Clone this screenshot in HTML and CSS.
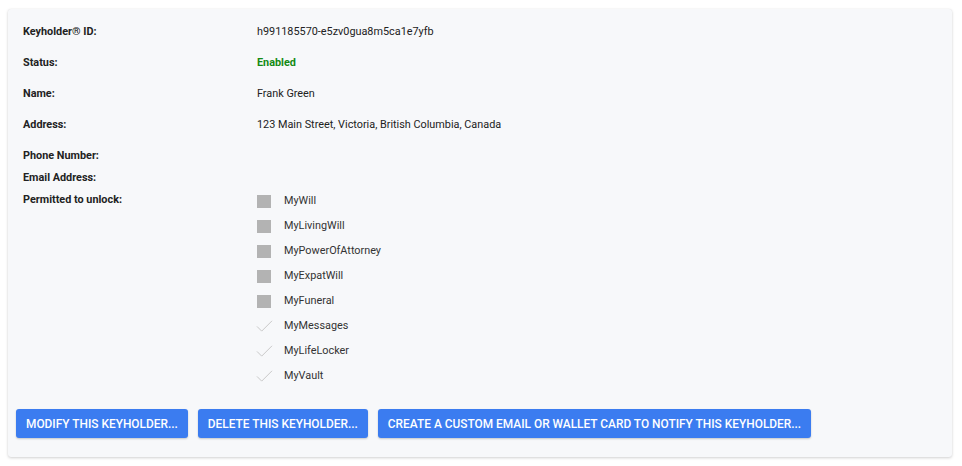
FILE: index.html
```html
<!DOCTYPE html>
<html lang="en">
<head>
<meta charset="utf-8">
<title>Keyholder</title>
<link rel="stylesheet" href="styles.css">
</head>
<body>
<div class="card">
  <div class="info">
    <div class="row"><div class="label">Keyholder® ID:</div><div class="value">h991185570-e5zv0gua8m5ca1e7yfb</div></div>
    <div class="row"><div class="label">Status:</div><div class="value status">Enabled</div></div>
    <div class="row"><div class="label">Name:</div><div class="value">Frank Green</div></div>
    <div class="row"><div class="label">Address:</div><div class="value">123 Main Street, Victoria, British Columbia, Canada</div></div>
    <div class="row tight"><div class="label">Phone Number:</div><div class="value"></div></div>
    <div class="row tight"><div class="label">Email Address:</div><div class="value"></div></div>
    <div class="row last">
      <div class="label">Permitted to unlock:</div>
      <ul class="perms">
        <li><span class="box"></span>MyWill</li>
        <li><span class="box"></span>MyLivingWill</li>
        <li><span class="box"></span>MyPowerOfAttorney</li>
        <li><span class="box"></span>MyExpatWill</li>
        <li><span class="box"></span>MyFuneral</li>
        <li><svg class="check" viewBox="0 0 18 16"><polyline points="1,9 6,14 17,3"/></svg>MyMessages</li>
        <li><svg class="check" viewBox="0 0 18 16"><polyline points="1,9 6,14 17,3"/></svg>MyLifeLocker</li>
        <li><svg class="check" viewBox="0 0 18 16"><polyline points="1,9 6,14 17,3"/></svg>MyVault</li>
      </ul>
    </div>
  </div>
  <div class="actions">
    <button class="btn">Modify this Keyholder...</button>
    <button class="btn">Delete this Keyholder...</button>
    <button class="btn">Create a custom email or wallet card to notify this Keyholder...</button>
  </div>
</div>
</body>
</html>
```
FILE: styles.css
```css
html, body {
  margin: 0;
  padding: 0;
  background: #ffffff;
}
body {
  padding: 9px 10px 9px 8px;
  font-family: Roboto, "Liberation Sans", Arial, sans-serif;
  font-size: 10.85px;
  color: #222;
}
.card {
  background: #f7f8fa;
  border-radius: 3px;
  box-shadow: 0 1px 3px rgba(0, 0, 0, 0.18), 0 0 1px rgba(0, 0, 0, 0.08);
  padding: 16px 8px 20px 8px;
  height: 448px;
  box-sizing: border-box;
}
.info {
  padding-left: 7px;
}
.row {
  display: grid;
  grid-template-columns: 234px 1fr;
  line-height: 14px;
  padding-bottom: 17px;
}
.row.tight {
  padding-bottom: 8px;
}
.row.last {
  padding-bottom: 0;
}
.label {
  font-weight: 700;
  color: #222;
}
.value {
  color: #222;
}
.status {
  color: #138a13;
  font-weight: 700;
}
.perms {
  list-style: none;
  margin: -5px 0 0 0;
  padding: 0;
}
.perms li {
  display: flex;
  align-items: center;
  height: 25px;
  gap: 13px;
  color: #333;
}
.box {
  display: inline-block;
  width: 14px;
  height: 13px;
  background: #b3b3b3;
  margin-top: 2px;
}
.check {
  width: 17px;
  height: 15px;
  margin-left: -1px;
  margin-right: -2px;
  fill: none;
  stroke: #c4c4c4;
  stroke-width: 1;
}
.actions {
  display: flex;
  gap: 10px;
  margin-top: 21px;
}
.btn {
  font-family: Roboto, "Liberation Sans", Arial, sans-serif;
  font-size: 11.9px;
  font-weight: 500;
  text-transform: uppercase;
  color: #fff;
  background: #3b7cf0;
  border: none;
  border-radius: 3px;
  height: 29px;
  padding: 0 10px;
  box-shadow: 0 1px 2px rgba(0, 0, 0, 0.2);
  cursor: pointer;
}
```
